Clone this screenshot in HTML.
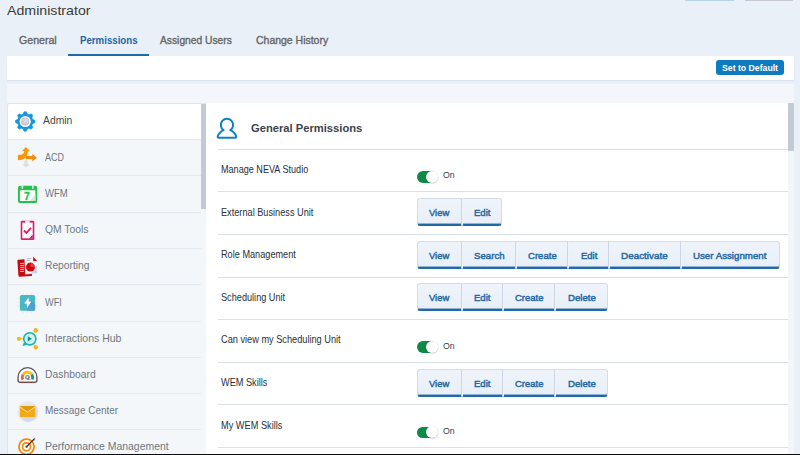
<!DOCTYPE html>
<html><head><meta charset="utf-8"><title>Administrator - Permissions</title>
<style>
*{box-sizing:border-box;margin:0;padding:0}
html,body{width:800px;height:455px;overflow:hidden}
body{background:#e9f0f8;font-family:"Liberation Sans",sans-serif;position:relative}
.a{position:absolute}
.t{position:absolute;white-space:nowrap;line-height:20px;height:20px;transform-origin:0 0}
.bar{left:7px;top:56px;width:787px;height:24px;background:#fff;box-shadow:0 1px 1px rgba(120,140,170,.12)}
.band{left:7px;top:84px;width:787px;height:19px;background:#f3f6fa}
.uline{left:68px;top:54px;width:81px;height:2px;background:#1f6aa8}
.btnd{left:716px;top:60px;width:67.5px;height:14.7px;background:#0d7bbd;border-radius:3px}
.side{left:7px;top:103px;width:199px;height:352px;background:#f4f7fa;border-left:1px solid #dfe5ec;border-top:1px solid #dfe5ec;border-top-left-radius:3px}
.sel{left:8px;top:104px;width:192.5px;height:35px;background:#fff;border-top-left-radius:2px}
.sep{left:8px;width:192.5px;height:1px;background:#e4e9ef}
.sthumb{left:200.5px;top:103.5px;width:5.3px;height:105.5px;background:#c3cad3}
.main{left:206px;top:103px;width:582px;height:352px;background:#fff}
.rscroll{left:788px;top:103px;width:6px;height:352px;background:#f3f6f9}
.rthumb{left:788px;top:103px;width:6px;height:47.5px;background:#c3cad3}
.hl{left:217.5px;width:570.5px;height:1px;background:#dbe0e6}
.grp{height:28px}
.grp .b{position:absolute;top:0;height:28px;background:linear-gradient(#eff4fa,#e8eff8);border:1px solid #d3dce7;border-bottom:2px solid #1f69a7;border-right-color:#ccd6e2;border-left-color:#eef3fa;border-radius:0 0 1.5px 1.5px;box-shadow:inset 0 -1px 0 rgba(31,105,167,.45)}
.grp .f{border-left-color:#d3dce7;border-top-left-radius:3px;border-bottom-left-radius:3px}
.grp .l{border-top-right-radius:3px;border-bottom-right-radius:3px;border-right-color:#d3dce7}
.tog{left:416.5px;width:20px;height:11.6px;border-radius:6px;background:#0e8a47}
.knob{left:425.5px;width:12.4px;height:12.4px;border-radius:50%;background:#fff;box-shadow:0 0.5px 1.5px rgba(0,0,0,.28)}
.bottom{left:0;top:453.5px;width:800px;height:2px;background:#0c0c0c}
.tb1{left:684.5px;top:0;width:49.5px;height:1px;background:#b7d4e7}
.tb2{left:744.5px;top:0;width:48.5px;height:1px;background:#c9c9cd}
</style></head>
<body>
<div class="a tb1" style=""></div>
<div class="a tb2" style=""></div>
<div class="a uline" style=""></div>
<div class="a bar" style=""></div>
<div class="a btnd" style=""></div>
<div class="a band" style=""></div>
<div class="a side" style=""></div>
<div class="a sel" style=""></div>
<div class="a sep" style="top:139px"></div>
<div class="a sep" style="top:175.4px"></div>
<div class="a sep" style="top:211.8px"></div>
<div class="a sep" style="top:248px"></div>
<div class="a sep" style="top:284.3px"></div>
<div class="a sep" style="top:320.5px"></div>
<div class="a sep" style="top:356.7px"></div>
<div class="a sep" style="top:393px"></div>
<div class="a sep" style="top:429.3px"></div>
<div class="a sthumb" style=""></div>
<div class="a main" style=""></div>
<div class="a rscroll" style=""></div>
<div class="a rthumb" style=""></div>
<div class="a hl" style="top:148.6px"></div>
<div class="a hl" style="top:191.2px"></div>
<div class="a hl" style="top:233.9px"></div>
<div class="a hl" style="top:276.5px"></div>
<div class="a hl" style="top:319.1px"></div>
<div class="a hl" style="top:361.8px"></div>
<div class="a hl" style="top:404.3px"></div>
<div class="a hl" style="top:447.1px"></div>
<div class="a grp" style="left:417px;top:198px"><div class="b f" style="left:0px;width:45px"></div><div class="b l" style="left:45px;width:40px"></div></div>
<div class="a grp" style="left:417px;top:241px"><div class="b f" style="left:0px;width:45px"></div><div class="b" style="left:45px;width:54px"></div><div class="b" style="left:99px;width:52px"></div><div class="b" style="left:151px;width:41px"></div><div class="b" style="left:192px;width:72px"></div><div class="b l" style="left:264px;width:99px"></div></div>
<div class="a grp" style="left:417px;top:283px"><div class="b f" style="left:0px;width:45px"></div><div class="b" style="left:45px;width:41px"></div><div class="b" style="left:86px;width:52px"></div><div class="b l" style="left:138px;width:53px"></div></div>
<div class="a grp" style="left:417px;top:369px"><div class="b f" style="left:0px;width:45px"></div><div class="b" style="left:45px;width:41px"></div><div class="b" style="left:86px;width:52px"></div><div class="b l" style="left:138px;width:53px"></div></div>
<div class="a tog" style="top:171px"></div>
<div class="a knob" style="top:170.6px"></div>
<div class="a tog" style="top:341.4px"></div>
<div class="a knob" style="top:341.0px"></div>
<div class="a tog" style="top:426.5px"></div>
<div class="a knob" style="top:426.1px"></div>
<svg class="a" style="left:0;top:0" width="800" height="455" viewBox="0 0 800 455">
<defs><radialGradient id="gc" cx="0.6" cy="0.35" r="0.7"><stop offset="0" stop-color="#f3daf3"/><stop offset="0.55" stop-color="#d6d0da"/><stop offset="1" stop-color="#b9b9c0"/></radialGradient><clipPath id="mc"><circle cx="27.8" cy="411.5" r="10.5"/></clipPath></defs>
<g><path d="M23.05,114.11 L24.05,111.77 L26.35,111.77 L27.35,114.11 L28.91,114.75 L31.27,113.80 L32.90,115.43 L31.95,117.79 L32.59,119.35 L34.93,120.35 L34.93,122.65 L32.59,123.65 L31.95,125.21 L32.90,127.57 L31.27,129.20 L28.91,128.25 L27.35,128.89 L26.35,131.23 L24.05,131.23 L23.05,128.89 L21.49,128.25 L19.13,129.20 L17.50,127.57 L18.45,125.21 L17.81,123.65 L15.47,122.65 L15.47,120.35 L17.81,119.35 L18.45,117.79 L17.50,115.43 L19.13,113.80 L21.49,114.75Z" fill="#1597dc" stroke="#1597dc" stroke-width="0.6" stroke-linejoin="round"/><circle cx="25.2" cy="121.5" r="5.6" fill="#fff"/><circle cx="25.2" cy="121.5" r="3.7" fill="url(#gc)" stroke="#c2c2c8" stroke-width="0.7"/></g>
<g><path d="M24.3,160.2 L27.7,160.2 L27.7,163.9 L29.9,163.9 L26,167.8 L22.1,163.9 L24.3,163.9Z" fill="#dfdfdf"/><path d="M25.6,156.1 L32.3,156.1 L32.3,153.8 L36.8,157.7 L32.3,161.5 L32.3,159.3 L25.6,159.3Z" fill="#e8900c"/><path d="M25.8,147.1 L29.9,151.3 L27.7,151.3 C27.7,157.2 24.2,160.3 17.9,160.3 L17.9,154.9 C22.2,154.9 24.2,154 24.2,151.3 L21.9,151.3Z" fill="#ff9600"/></g>
<g><rect x="18" y="185.7" width="19.2" height="17.4" rx="2.2" fill="#21c24e"/><rect x="19.9" y="190.3" width="15.5" height="10.6" rx="0.6" fill="#fff"/><path d="M29.5,200.9 L35.4,194.6 L35.4,200.3 Q35.4,200.9 34.8,200.9Z" fill="#cdf0d6"/><path d="M33.2,200.9 L35.4,198.6 L35.4,200.9Z" fill="#e8c5cc"/><rect x="21.6" y="184.6" width="1.5" height="4.4" rx="0.7" fill="#e9ecec"/><rect x="32.1" y="184.6" width="1.5" height="4.4" rx="0.7" fill="#e9ecec"/><text x="27" y="199.5" font-family="Liberation Sans" font-weight="bold" font-size="10" text-anchor="middle" fill="#21c24e" stroke="#21c24e" stroke-width="0.35">7</text></g>
<g><rect x="20.7" y="220.8" width="13.6" height="19.1" rx="1.2" fill="#e1176f"/><rect x="22.3" y="222.6" width="10.4" height="15.7" fill="#fff"/><path d="M29,238.3 L32.7,234.5 L32.7,238.3Z" fill="#c4155f"/><path d="M27.4,238.3 L32.7,232.8 L32.7,234.5 L29,238.3Z" fill="#ebe7e9"/><rect x="25.2" y="220.4" width="4.6" height="2.6" rx="0.6" fill="#ebe6e8"/><path d="M23.9,230.5 L26.4,233 L30.9,227.9" fill="none" stroke="#e1176f" stroke-width="1.8"/></g>
<g><rect x="17.9" y="259.2" width="13.6" height="17.2" rx="1" fill="#c40a10" transform="rotate(-4 24.7 267.8)"/><g stroke="#f4c7c7" stroke-width="0.9"><path d="M20.1,263.6 L24,263.3"/><path d="M20.1,265.6 L24,265.3"/><path d="M20.1,267.6 L24,267.3"/><path d="M20.1,269.6 L24,269.3"/><path d="M20.1,271.6 L24,271.3"/></g><path d="M24.6,257.3 L33.1,256.6 L37.1,260.9 L37.1,273.1 L25.5,274.2Z" fill="#fcfdfd" stroke="#e3e8ec" stroke-width="0.5"/><path d="M33.8,267.5 L37.1,265.5 L37.1,273.1 L31,273.7Z" fill="#c6d4ef"/><path d="M33.1,256.6 L37.1,260.9 L33.3,261.3Z" fill="#c40a10"/><path d="M26.6,258.9 L31.4,258.5 M26.6,260.6 L30,260.3" stroke="#9aa3ad" stroke-width="0.8"/><circle cx="30.4" cy="267.1" r="4.5" fill="#d3050c"/><path d="M30.6,266.9 L30.6,262.9 A4.2,4.2 0 0 1 34.7,266.9Z" fill="#ea3a40"/></g>
<g><g stroke="#f3e2d7" stroke-width="1"><path d="M23.5,293 L23.5,294.7 M23.5,311.1 L23.5,312.8"/><path d="M27.3,293 L27.3,294.7 M27.3,311.1 L27.3,312.8"/><path d="M31.1,293 L31.1,294.7 M31.1,311.1 L31.1,312.8"/><path d="M17.6,298.6 L19.6,298.6 M35.4,298.6 L37.3,298.6"/><path d="M17.6,302.3 L19.6,302.3 M35.4,302.3 L37.3,302.3"/><path d="M17.6,305.9 L19.6,305.9 M35.4,305.9 L37.3,305.9"/></g><rect x="19.9" y="294.9" width="15.2" height="15.9" rx="1.6" fill="#47b9c3"/><path d="M30.6,300 L35.1,304.6 L35.1,309.2 Q35.1,310.8 33.5,310.8 L27.2,310.8 L27.4,307.5Z" fill="#4f9fd2"/><path d="M28.6,297.4 L24.1,303.6 L26.6,303.6 L27.2,307.9 L31.2,301.5 L28.8,301.5Z" fill="#fff"/></g>
<g><path d="M18.9,338.8 L29.8,338.8 M35.8,330.3 L29.8,338.8 L35.8,347.2" stroke="#e9a92a" stroke-width="0.9" fill="none"/><circle cx="18.9" cy="338.8" r="2.1" fill="#fbb024"/><circle cx="35.8" cy="330.3" r="2.2" fill="#fbb024"/><circle cx="35.8" cy="347.2" r="2.2" fill="#fbb024"/><path d="M22.4,346 L24,342 L27,345.1Z" fill="#1cb5b3"/><circle cx="29.8" cy="338.8" r="6.9" fill="#1cb5b3"/><circle cx="29.8" cy="338.8" r="5.3" fill="#cff2ef"/><path d="M27.8,336.3 L27.8,341.4 L31.9,338.85Z" fill="#0b8f89"/></g>
<g><path d="M20.2,382.4 Q18.1,382.4 18.1,380.3 L18.1,377 A9.4,9.4 0 0 1 36.9,377 L36.9,380.3 Q36.9,382.4 34.8,382.4Z" fill="#fff" stroke="#5b5252" stroke-width="1.35"/><path d="M20.2,382.4 L34.8,382.4" stroke="#7a4a48" stroke-width="1.35"/><path d="M22.87,379.74 A5.2,5.2 0 0 1 23.05,374.54" stroke="#f0634b" stroke-width="2.8" fill="none"/><path d="M23.05,374.54 A5.2,5.2 0 0 1 31.77,374.39" stroke="#f8c013" stroke-width="2.8" fill="none"/><path d="M31.77,374.39 A5.2,5.2 0 0 1 32.21,379.42" stroke="#0f9c94" stroke-width="2.8" fill="none"/><circle cx="27.46" cy="377.3" r="2.4" fill="#858585"/><path d="M27.4,378.4 L31.8,379.3 L27.4,379.8Z" fill="#6a6a6a"/><circle cx="27.3" cy="377.2" r="1" fill="#fff"/></g>
<g><circle cx="27.8" cy="411.5" r="10.5" fill="#e9e9ec"/><g clip-path="url(#mc)"><path d="M19.9,417 L35.2,405.9 L45,415 L32,428Z" fill="#d6dae7"/></g><rect x="19.9" y="405.9" width="15.3" height="11.1" fill="#f2a91a"/><path d="M19.9,405.9 L35.2,405.9 L27.55,411Z" fill="#df980f"/><path d="M19.9,406.9 L27.55,412.3 L35.2,406.9" stroke="#fbe6b0" stroke-width="0.8" fill="none"/></g>
<g><circle cx="26.5" cy="446.8" r="7.6" fill="#fff" stroke="#f5850d" stroke-width="1.8"/><circle cx="26.5" cy="446.8" r="4" fill="none" stroke="#f5850d" stroke-width="1.7"/><circle cx="26.5" cy="446.8" r="1.4" fill="#f5850d"/><path d="M32.6,438.9 L35.2,437.4 L35.6,440.4 L33.8,441.2Z" fill="#c9ccd0"/><path d="M26.3,447 L34.6,438.6" stroke="#262626" stroke-width="1.1"/></g>
<path d="M223.6,130.1 A6.15,6.15 0 1 1 230.3,130.1 C233.4,131.5 235.6,134.3 236.2,136.4 Q236.5,137.7 235.1,137.7 L218.8,137.7 Q217.4,137.7 217.7,136.4 C218.3,134.3 220.5,131.5 223.6,130.1Z" fill="none" stroke="#0f80c1" stroke-width="2" stroke-linejoin="round"/>
</svg>
<div class="t" style="left:7.30px;top:1px;font-size:13.6px;font-weight:normal;color:#3a3a3a;transform:scaleX(1.0428)">Administrator</div>
<div class="t" style="left:18.90px;top:30px;font-size:10.9px;font-weight:normal;color:#666;transform:scaleX(0.9733);-webkit-text-stroke:0.35px #666">General</div>
<div class="t" style="left:79.70px;top:30px;font-size:10.9px;font-weight:bold;color:#1e66a3;transform:scaleX(0.8885)">Permissions</div>
<div class="t" style="left:160.20px;top:30px;font-size:10.9px;font-weight:normal;color:#666;transform:scaleX(0.9425);-webkit-text-stroke:0.35px #666">Assigned Users</div>
<div class="t" style="left:256.20px;top:30px;font-size:10.9px;font-weight:normal;color:#666;transform:scaleX(0.9615);-webkit-text-stroke:0.35px #666">Change History</div>
<div class="t" style="left:721.70px;top:58px;font-size:9.3px;font-weight:bold;color:#ffffff;transform:scaleX(0.9345)">Set to Default</div>
<div class="t" style="left:43.20px;top:110px;font-size:10.7px;font-weight:normal;color:#474747;transform:scaleX(0.9687)">Admin</div>
<div class="t" style="left:45.20px;top:147px;font-size:10.7px;font-weight:normal;color:#6e7781;transform:scaleX(0.8404)">ACD</div>
<div class="t" style="left:45.20px;top:183px;font-size:10.7px;font-weight:normal;color:#6e7781;transform:scaleX(0.8901)">WFM</div>
<div class="t" style="left:45.20px;top:219px;font-size:10.7px;font-weight:normal;color:#6e7781;transform:scaleX(0.9690)">QM Tools</div>
<div class="t" style="left:45.40px;top:255px;font-size:10.7px;font-weight:normal;color:#6e7781;transform:scaleX(0.9591)">Reporting</div>
<div class="t" style="left:45.40px;top:292px;font-size:10.7px;font-weight:normal;color:#6e7781;transform:scaleX(0.8595)">WFI</div>
<div class="t" style="left:45.40px;top:328px;font-size:10.7px;font-weight:normal;color:#6e7781;transform:scaleX(0.9823)">Interactions Hub</div>
<div class="t" style="left:45.40px;top:364px;font-size:10.7px;font-weight:normal;color:#6e7781;transform:scaleX(0.9687)">Dashboard</div>
<div class="t" style="left:45.40px;top:400px;font-size:10.7px;font-weight:normal;color:#6e7781;transform:scaleX(0.9321)">Message Center</div>
<div class="t" style="left:45.40px;top:436px;font-size:10.7px;font-weight:normal;color:#6e7781;transform:scaleX(0.9774)">Performance Management</div>
<div class="t" style="left:251.40px;top:118px;font-size:11.8px;font-weight:bold;color:#3b434d;transform:scaleX(0.9481)">General Permissions</div>
<div class="t" style="left:220.60px;top:160px;font-size:10.2px;font-weight:normal;color:#2a2f37;transform:scaleX(0.8918)">Manage NEVA Studio</div>
<div class="t" style="left:220.60px;top:203px;font-size:10.2px;font-weight:normal;color:#2a2f37;transform:scaleX(0.9011)">External Business Unit</div>
<div class="t" style="left:220.60px;top:245px;font-size:10.2px;font-weight:normal;color:#2a2f37;transform:scaleX(0.8991)">Role Management</div>
<div class="t" style="left:220.60px;top:288px;font-size:10.2px;font-weight:normal;color:#2a2f37;transform:scaleX(0.8990)">Scheduling Unit</div>
<div class="t" style="left:220.60px;top:330px;font-size:10.2px;font-weight:normal;color:#2a2f37;transform:scaleX(0.9030)">Can view my Scheduling Unit</div>
<div class="t" style="left:220.60px;top:373px;font-size:10.2px;font-weight:normal;color:#2a2f37;transform:scaleX(0.9007)">WEM Skills</div>
<div class="t" style="left:220.60px;top:416px;font-size:10.2px;font-weight:normal;color:#2a2f37;transform:scaleX(0.9039)">My WEM Skills</div>
<div class="t" style="left:442.90px;top:165px;font-size:9px;font-weight:normal;color:#3a4048;transform:scaleX(0.9750)">On</div>
<div class="t" style="left:442.90px;top:336px;font-size:9px;font-weight:normal;color:#3a4048;transform:scaleX(0.9750)">On</div>
<div class="t" style="left:442.90px;top:421px;font-size:9px;font-weight:normal;color:#3a4048;transform:scaleX(0.9750)">On</div>
<div class="t" style="left:428.90px;top:203px;font-size:9.9px;font-weight:normal;color:#2367a3;transform:scaleX(0.9550);-webkit-text-stroke:0.45px #2367a3">View</div>
<div class="t" style="left:473.90px;top:203px;font-size:9.9px;font-weight:normal;color:#2367a3;transform:scaleX(0.9669);-webkit-text-stroke:0.45px #2367a3">Edit</div>
<div class="t" style="left:428.90px;top:246px;font-size:9.9px;font-weight:normal;color:#2367a3;transform:scaleX(0.9550);-webkit-text-stroke:0.45px #2367a3">View</div>
<div class="t" style="left:473.50px;top:246px;font-size:9.9px;font-weight:normal;color:#2367a3;transform:scaleX(0.9774);-webkit-text-stroke:0.45px #2367a3">Search</div>
<div class="t" style="left:527.60px;top:246px;font-size:9.9px;font-weight:normal;color:#2367a3;transform:scaleX(0.9686);-webkit-text-stroke:0.45px #2367a3">Create</div>
<div class="t" style="left:581.00px;top:246px;font-size:9.9px;font-weight:normal;color:#2367a3;transform:scaleX(0.9611);-webkit-text-stroke:0.45px #2367a3">Edit</div>
<div class="t" style="left:621.30px;top:246px;font-size:9.9px;font-weight:normal;color:#2367a3;transform:scaleX(1.0008);-webkit-text-stroke:0.45px #2367a3">Deactivate</div>
<div class="t" style="left:692.70px;top:246px;font-size:9.9px;font-weight:normal;color:#2367a3;transform:scaleX(0.9835);-webkit-text-stroke:0.45px #2367a3">User Assignment</div>
<div class="t" style="left:428.90px;top:288px;font-size:9.9px;font-weight:normal;color:#2367a3;transform:scaleX(0.9550);-webkit-text-stroke:0.45px #2367a3">View</div>
<div class="t" style="left:473.90px;top:288px;font-size:9.9px;font-weight:normal;color:#2367a3;transform:scaleX(0.9669);-webkit-text-stroke:0.45px #2367a3">Edit</div>
<div class="t" style="left:514.70px;top:288px;font-size:9.9px;font-weight:normal;color:#2367a3;transform:scaleX(0.9586);-webkit-text-stroke:0.45px #2367a3">Create</div>
<div class="t" style="left:567.70px;top:288px;font-size:9.9px;font-weight:normal;color:#2367a3;transform:scaleX(0.9775);-webkit-text-stroke:0.45px #2367a3">Delete</div>
<div class="t" style="left:428.90px;top:374px;font-size:9.9px;font-weight:normal;color:#2367a3;transform:scaleX(0.9550);-webkit-text-stroke:0.45px #2367a3">View</div>
<div class="t" style="left:473.90px;top:374px;font-size:9.9px;font-weight:normal;color:#2367a3;transform:scaleX(0.9669);-webkit-text-stroke:0.45px #2367a3">Edit</div>
<div class="t" style="left:514.70px;top:374px;font-size:9.9px;font-weight:normal;color:#2367a3;transform:scaleX(0.9586);-webkit-text-stroke:0.45px #2367a3">Create</div>
<div class="t" style="left:567.70px;top:374px;font-size:9.9px;font-weight:normal;color:#2367a3;transform:scaleX(0.9775);-webkit-text-stroke:0.45px #2367a3">Delete</div>
<div class="a bottom" style=""></div>
</body></html>
